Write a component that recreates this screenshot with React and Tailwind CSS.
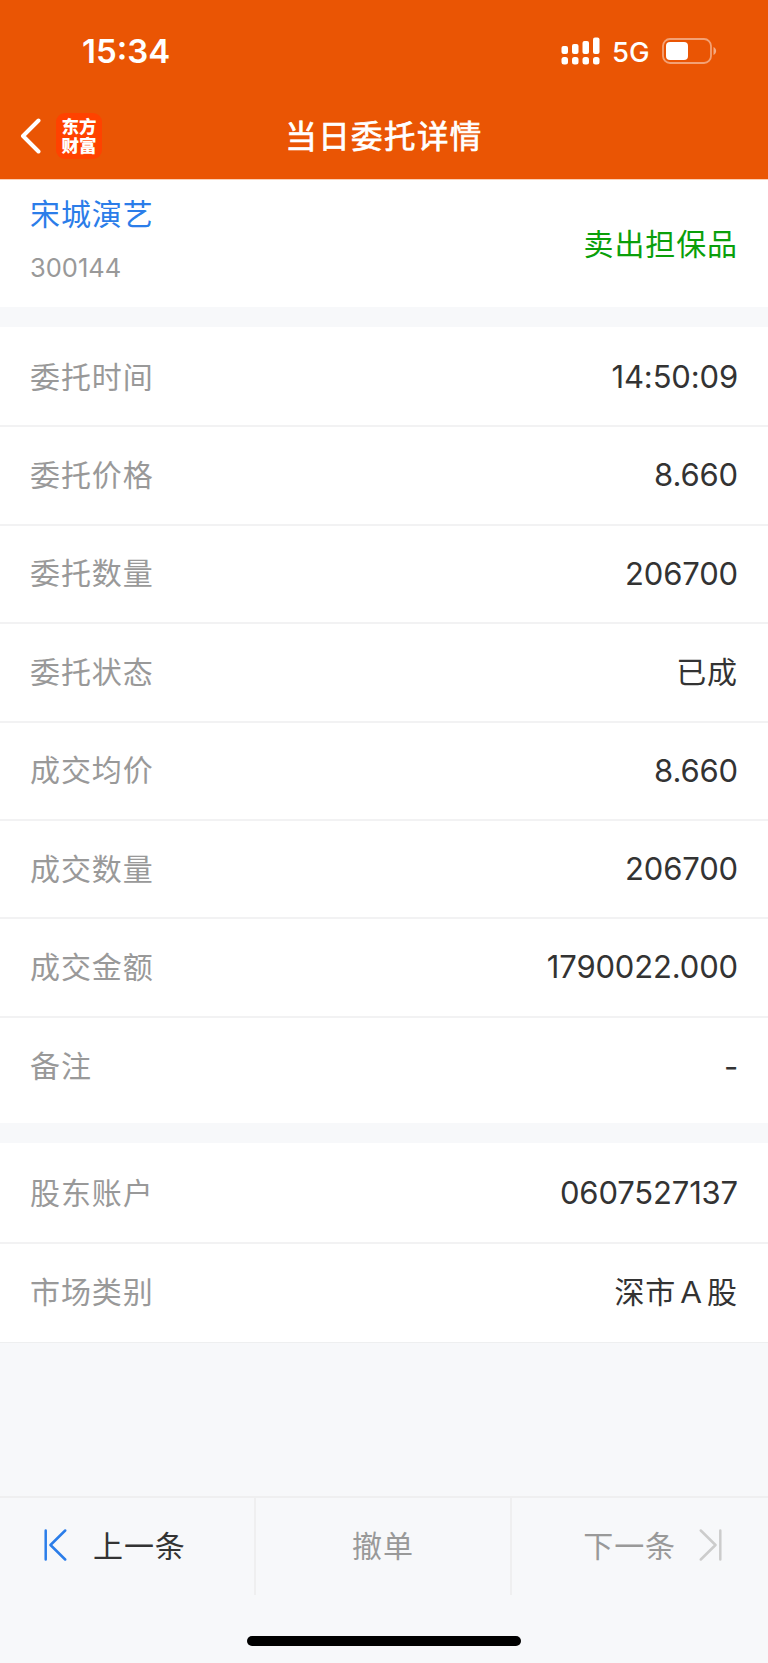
const orderRows = [
  { label: '委托时间', value: '14:50:09' },
  { label: '委托价格', value: '8.660' },
  { label: '委托数量', value: '206700' },
  { label: '委托状态', value: '已成', cjk: true },
  { label: '成交均价', value: '8.660' },
  { label: '成交数量', value: '206700' },
  { label: '成交金额', value: '1790022.000' },
  { label: '备注', value: '-' },
]

const accountRows = [
  { label: '股东账户', value: '0607527137' },
  { label: '市场类别', value: '深市Ａ股', cjk: true },
]

function SignalIcon() {
  return (
    <svg width="40" height="28" viewBox="0 0 40 28" fill="#fff">
      <rect x="0.5" y="9" width="6.5" height="8" rx="2" />
      <rect x="11" y="7" width="6.5" height="10" rx="2" />
      <rect x="21.5" y="4" width="6.5" height="13" rx="2" />
      <rect x="32" y="0.5" width="6.5" height="16.5" rx="2" />
      <rect x="0.5" y="20" width="6.5" height="7.5" rx="2.5" />
      <rect x="11" y="20" width="6.5" height="7.5" rx="2.5" />
      <rect x="21.5" y="20" width="6.5" height="7.5" rx="2.5" />
      <rect x="32" y="20" width="6.5" height="7.5" rx="2.5" />
    </svg>
  )
}

function BatteryIcon() {
  return (
    <svg width="56" height="27" viewBox="0 0 56 27" fill="none">
      <rect x="1" y="1" width="48" height="24" rx="7" stroke="#fff" strokeOpacity="0.45" strokeWidth="1.8" />
      <rect x="4" y="4" width="22" height="18" rx="4" fill="#fff" />
      <path d="M51.500 9c3.500 1.500 3.500 6.500 0 8z" fill="#fff" fillOpacity="0.5" />
    </svg>
  )
}

function StepIcon({ className }) {
  return (
    <svg className={className} width="24" height="32" viewBox="0 0 24 32" fill="none" stroke="currentColor" strokeWidth="2.5" strokeLinecap="round" strokeLinejoin="round">
      <path d="M1.700 1.500v29M21.200 1.500L6.500 16l14.700 14.500" />
    </svg>
  )
}

function Row({ label, value, cjk }) {
  return (
    <div className="flex h-[98.4px] items-center justify-between border-b-2 border-[#f2f2f3] px-[30px] last:border-b-0">
      <span className="text-[30px] tracking-[0.9px] text-[#999]">{label}</span>
      <span className={cjk ? 'text-[30px] tracking-[0.9px] text-[#333]' : 'text-[31px] tracking-[-0.15px] text-[#333]'}>{value}</span>
    </div>
  )
}

function Header() {
  return (
    <header className="h-[180px] border-b border-[#fbcfb6] bg-[#ea5504] text-white">
      <div className="flex h-[102px] items-center pl-[82px]">
        <span className="text-[33px] leading-[40px] font-semibold">15:34</span>
        <div className="ml-auto flex items-center pr-[50px]">
          <SignalIcon />
          <span className="ml-[11px] w-[50px] pt-[2px] text-[27.500px] leading-[28px] font-medium">5G</span>
          <BatteryIcon />
        </div>
      </div>
      <div className="grid h-[68px] grid-cols-[1fr_auto_1fr] items-center">
        <div className="flex items-center pl-[20px]">
          <svg width="22" height="36" viewBox="0 0 22 36" fill="none" stroke="#fff" strokeWidth="4" strokeLinecap="round" strokeLinejoin="round">
            <path d="M18.500 2.500L3 18l15.500 15.500" />
          </svg>
          <div className="ml-[14px] flex h-[46px] w-[46px] flex-col items-center justify-center rounded-[9px] bg-[#ff4200] text-[17.500px] leading-[19px] font-black">
            <span>东方</span>
            <span>财富</span>
          </div>
        </div>
        <h1 className="pt-[2px] text-[31.500px] font-normal tracking-[1.400px] [-webkit-text-stroke:0.7px_white]">当日委托详情</h1>
      </div>
    </header>
  )
}

function Footer() {
  return (
    <footer className="mt-auto h-[167px] border-t-2 border-[#efeff0]">
      <div className="flex h-[97px] text-[30px] tracking-[0.9px]">
        <button className="flex w-[256px] items-center border-r-2 border-[#efeff0] pl-[44px] text-[#333]">
          <StepIcon className="mb-[3px] text-[#2b7de9]" />
          <span className="ml-[25px]">上一条</span>
        </button>
        <button className="w-[256px] border-r-2 border-[#efeff0] text-[#999]">撤单</button>
        <button className="flex w-[256px] items-center justify-end pr-[46px] text-[#999]">
          <span className="mr-[22px]">下一条</span>
          <StepIcon className="mb-[3px] rotate-180 text-[#ccc]" />
        </button>
      </div>
      <div className="mx-auto mt-[41px] h-[10px] w-[274px] rounded-full bg-black" />
    </footer>
  )
}

export default function App() {
  return (
    <main className="flex h-[1663px] w-[768px] flex-col bg-[#f7f8fa] font-['Inter','Noto_Sans_CJK_SC',sans-serif]">
      <Header />
      <section className="flex h-[127px] justify-between bg-white px-[30px]">
        <div className="flex flex-col pt-[13px]">
          <span className="text-[30px] leading-[42px] tracking-[0.9px] text-[#2b7de9]">宋城演艺</span>
          <span className="mt-[17px] text-[25.500px] leading-[32px] text-[#999]">300144</span>
        </div>
        <span className="pt-[43px] text-[30px] leading-[42px] tracking-[0.9px] text-[#0a9f0a]">卖出担保品</span>
      </section>
      <section className="mt-5 bg-white pt-[2px] pb-[7px]">
        {orderRows.map((row) => (
          <Row key={row.label} {...row} />
        ))}
      </section>
      <section className="mt-5 border-b border-[#eeeff0] bg-white pt-[2px]">
        {accountRows.map((row) => (
          <Row key={row.label} {...row} />
        ))}
      </section>
      <Footer />
    </main>
  )
}
